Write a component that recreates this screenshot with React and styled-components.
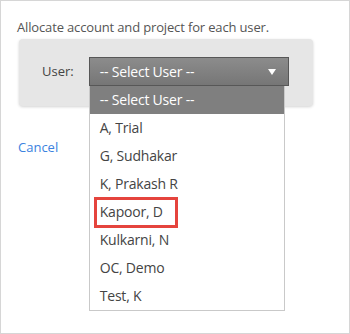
import React, { useState } from "react";
import styled, { createGlobalStyle } from "styled-components";

const GlobalStyle = createGlobalStyle`
  html, body {
    margin: 0;
    padding: 0;
    background: #ffffff;
  }
  body {
    font-family: "Open Sans", "Noto Sans", Arial, sans-serif;
  }
`;

const users = [
  "-- Select User --",
  "A, Trial",
  "G, Sudhakar",
  "K, Prakash R",
  "Kapoor, D",
  "Kulkarni, N",
  "OC, Demo",
  "Test, K",
];

const Frame = styled.div`
  box-sizing: border-box;
  width: 350px;
  height: 334px;
  border: 1px solid #d6d6d6;
  padding: 17px 0 0 16px;
`;

const Intro = styled.p`
  margin: 0;
  font-size: 13px;
  line-height: 18px;
  color: #555555;
  letter-spacing: -0.15px;
`;

const Panel = styled.div`
  box-sizing: border-box;
  width: 294px;
  height: 67px;
  margin: 3px 0 0 2px;
  padding: 18px 0 0 23px;
  background: #e6e6e6;
  border-radius: 4px;
  box-shadow: 0 1px 3px rgba(0, 0, 0, 0.18);
  display: flex;
  align-items: flex-start;
  gap: 15px;
`;

const Label = styled.span`
  font-size: 13px;
  line-height: 29px;
  color: #444444;
`;

const SelectWrap = styled.div`
  position: relative;
`;

const SelectBox = styled.div`
  box-sizing: border-box;
  width: 200px;
  height: 29px;
  padding: 0 10px;
  border: 1px solid #575757;
  background: linear-gradient(#8c8c8c, #767676);
  color: #ffffff;
  font-size: 14px;
  letter-spacing: -0.2px;
  display: flex;
  align-items: center;
  justify-content: space-between;
`;

const Arrow = styled.svg`
  width: 8px;
  height: 6px;
  margin-right: 2px;
`;

const List = styled.ul`
  position: absolute;
  top: 29px;
  left: 0;
  box-sizing: border-box;
  width: 196px;
  margin: 0;
  padding: 0;
  list-style: none;
  background: #ffffff;
  border: 1px solid #c9c9c9;
  border-top: none;
`;

const Item = styled.li`
  position: relative;
  height: 28px;
  padding-left: 10px;
  font-size: 14px;
  line-height: 28px;
  letter-spacing: -0.2px;
  color: ${(p) => (p.$active ? "#ffffff" : "#444444")};
  background: ${(p) => (p.$active ? "#7f7f7f" : "transparent")};
`;

const Marker = styled.span`
  position: absolute;
  left: 4px;
  top: -1px;
  width: 84px;
  height: 31px;
  box-sizing: border-box;
  border: 3px solid #e5443d;
`;

const CancelLink = styled.a`
  display: inline-block;
  margin-top: 32px;
  margin-left: 1px;
  font-size: 13px;
  color: #3b82e0;
  text-decoration: none;
`;

export default function App() {
  const [selected] = useState(0);

  return (
    <>
      <GlobalStyle />
      <Frame>
        <Intro>Allocate account and project for each user.</Intro>
        <Panel>
          <Label>User:</Label>
          <SelectWrap>
            <SelectBox>
              <span>{users[0]}</span>
              <Arrow viewBox="0 0 8 6">
                <path d="M0 0 L8 0 L4 6 Z" fill="#ffffff" />
              </Arrow>
            </SelectBox>
            <List>
              {users.map((u, i) => (
                <Item key={u} $active={i === selected}>
                  {u}
                  {u === "Kapoor, D" && <Marker />}
                </Item>
              ))}
            </List>
          </SelectWrap>
        </Panel>
        <CancelLink href="#">Cancel</CancelLink>
      </Frame>
    </>
  );
}
